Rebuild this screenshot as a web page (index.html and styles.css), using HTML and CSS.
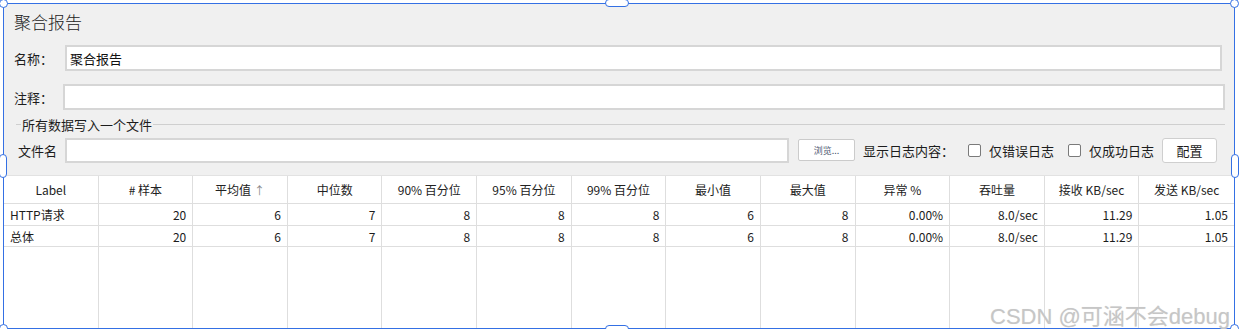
FILE: index.html
```html
<!DOCTYPE html>
<html lang="zh-CN">
<head>
    <meta charset="UTF-8">
    <title>聚合报告</title>
    <link rel="stylesheet" href="styles.css">
</head>
<body>

<div class="frame">
    <div class="panel">
        <div class="title">聚合报告</div>

        <div class="form-row name-row">
            <label class="row-label">名称：</label>
            <input class="field" type="text" value="聚合报告">
        </div>

        <div class="form-row comment-row">
            <label class="row-label">注释：</label>
            <input class="field" type="text">
        </div>

        <div class="group-title">
            <span class="group-line short"></span>
            <span class="group-text">所有数据写入一个文件</span>
            <span class="group-line"></span>
        </div>

        <div class="form-row file-row">
            <label class="row-label">文件名</label>
            <input class="field" type="text">
            <button class="browse-btn">浏览...</button>
            <span class="log-label">显示日志内容：</span>
            <span class="check"></span>
            <span class="check-text">仅错误日志</span>
            <span class="check"></span>
            <span class="check-text">仅成功日志</span>
            <button class="config-btn">配置</button>
        </div>
    </div>

    <div class="report" id="report"></div>

    <div class="watermark">CSDN @可涵不会debug</div>

    <!-- selection handles -->
    <span class="handle corner tl"></span>
    <span class="handle corner tr"></span>
    <span class="handle corner bl"></span>
    <span class="handle corner br"></span>
    <span class="handle pill-h top"></span>
    <span class="handle pill-h bottom"></span>
    <span class="handle pill-v left"></span>
    <span class="handle pill-v right"></span>
</div>

<script>
    // Cabecera y filas del informe
    const headers = ['Label', '# 样本', '平均值 <span class="sort">↑</span>', '中位数', '90% 百分位', '95% 百分位',
        '99% 百分位', '最小值', '最大值', '异常 %', '吞吐量', '接收 KB/sec', '发送 KB/sec'];
    const rows = [
        ['HTTP请求', '20', '6', '7', '8', '8', '8', '6', '8', '0.00%', '8.0/sec', '11.29', '1.05'],
        ['总体', '20', '6', '7', '8', '8', '8', '6', '8', '0.00%', '8.0/sec', '11.29', '1.05']
    ];

    function renderReport() {
        const report = document.getElementById('report');
        let html = '';
        headers.forEach(h => { html += `<div class="cell head">${h}</div>`; });
        rows.forEach(row => {
            row.forEach((v, i) => {
                html += `<div class="cell ${i === 0 ? 'text' : 'num'}">${v}</div>`;
            });
        });
        headers.forEach(() => { html += '<div class="cell filler"></div>'; });
        report.innerHTML = html;
    }

    renderReport();
</script>

</body>
</html>
```

FILE: styles.css
```css
body {
    margin: 0;
    background-color: #ffffff;
    font-family: "Noto Sans CJK SC", "Liberation Sans", sans-serif;
    color: #1c1c1c;
}

.frame {
    position: relative;
    margin: 3px 0 0 3px;
    width: 1230px;
    height: 324px;
    border: 1px solid #3470e4;
    display: flex;
    flex-direction: column;
}

.panel {
    height: 171px;
    background-color: #f0f0f0;
    display: flex;
    flex-direction: column;
    flex-shrink: 0;
}

.title {
    height: 36px;
    line-height: 36px;
    padding-left: 10px;
    font-size: 17px;
    font-weight: 300;
    color: #222;
}

.form-row {
    display: flex;
    align-items: center;
    height: 26px;
    font-size: 13px;
}

.row-label {
    flex-shrink: 0;
}

.field {
    flex: 1;
    min-width: 0;
    height: 26px;
    box-sizing: border-box;
    border: 2px solid #d6d6d6;
    background-color: #fff;
    padding: 0 3px;
    font-family: inherit;
    font-size: 13px;
    color: #111;
    outline: none;
}

.name-row {
    margin-top: 5px;
    margin-left: 10px;
    margin-right: 12px;
}

.name-row .row-label {
    width: 51px;
}

.comment-row {
    margin-top: 13px;
    margin-left: 10px;
    margin-right: 9px;
}

.comment-row .row-label {
    width: 49px;
}

.group-title {
    display: flex;
    align-items: center;
    height: 14px;
    margin: 7px 9px 0 12px;
    font-size: 13px;
}

.group-line {
    flex: 1;
    height: 1px;
    background-color: #cfcfcf;
}

.group-line.short {
    flex: 0 0 5px;
}

.group-text {
    padding: 0 1px;
}

.file-row {
    margin-top: 6px;
    margin-left: 14px;
    margin-right: 17px;
}

.file-row .row-label {
    width: 47px;
}

.file-row .field {
    height: 25px;
}

.browse-btn {
    width: 57px;
    height: 22px;
    margin-left: 9px;
    padding: 0;
    background-color: #fff;
    border: 1px solid #cbcbcb;
    border-radius: 2px;
    font-family: inherit;
    font-size: 9px;
    color: #4a5570;
}

.log-label {
    margin-left: 8px;
}

.check {
    width: 13px;
    height: 13px;
    box-sizing: border-box;
    border: 1px solid #7a7a7a;
    border-radius: 2px;
    background-color: #fff;
    margin-left: 14px;
    margin-right: 8px;
}

.config-btn {
    width: 55px;
    height: 25px;
    margin-left: 8px;
    padding: 0;
    background-color: #fff;
    border: 1px solid #cfcfcf;
    border-radius: 3px;
    font-family: inherit;
    font-size: 13px;
    color: #1c1c1c;
}

.report {
    flex: 1;
    display: grid;
    grid-template-columns: repeat(13, 1fr);
    grid-template-rows: 28px 22px 21px 1fr;
    background-color: #fff;
    border-top: 1px solid #e2e2e2;
    font-size: 12px;
}

.cell {
    border-right: 1px solid #dedede;
    border-bottom: 1px solid #dedede;
    padding: 0 6px;
    display: flex;
    align-items: center;
    white-space: nowrap;
    overflow: hidden;
}

.cell:nth-child(13n) {
    border-right: none;
}

.cell.head {
    justify-content: center;
    color: #222;
}

.cell.num {
    justify-content: flex-end;
}

.cell.filler {
    border-bottom: none;
}

.sort {
    color: #888;
    font-size: 11px;
    margin-left: 3px;
}

.watermark {
    position: absolute;
    left: 986px;
    top: 294px;
    font-family: "Liberation Sans", "Noto Sans CJK SC", sans-serif;
    font-size: 22px;
    color: #c6c6c6;
    text-shadow: 0 0 1px #e6e6e6;
    white-space: nowrap;
}

.handle {
    position: absolute;
    box-sizing: border-box;
    background-color: #fff;
    border: 1px solid #3470e4;
}

.corner {
    width: 9px;
    height: 9px;
    border-radius: 50%;
}

.tl { left: -5px; top: -5px; }
.tr { right: -5px; top: -5px; }
.bl { left: -5px; bottom: -5px; }
.br { right: -5px; bottom: -5px; }

.pill-h {
    width: 24px;
    height: 8px;
    border-radius: 4px;
    left: 601px;
}

.top { top: -5px; }
.bottom { bottom: -5px; }

.pill-v {
    width: 8px;
    height: 24px;
    border-radius: 4px;
    top: 150px;
}

.left { left: -5px; }
.right { right: -5px; }
```
